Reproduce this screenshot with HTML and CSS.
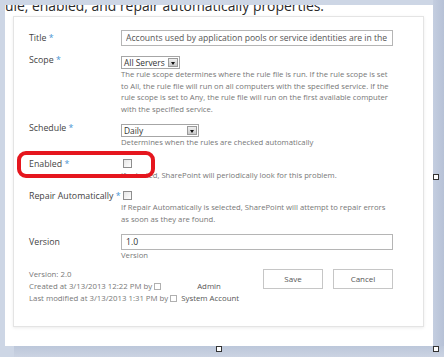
FILE: index.html
```html
<!DOCTYPE html>
<html lang="en">
<head>
    <meta charset="UTF-8">
    <title>Rule definition</title>
    <link rel="stylesheet" href="styles.css">
</head>
<body>

<div class="page">
    <p class="doc-text">ule, enabled, and repair automatically properties.</p>

    <div class="dialog">
        <div class="row">
            <div class="label label-input">Title <span class="req">*</span></div>
            <div class="control">
                <input class="textbox" type="text" value="Accounts used by application pools or service identities are in the local machine Administrators group">
            </div>
        </div>

        <div class="row row-scope">
            <div class="label label-select">Scope <span class="req">*</span></div>
            <div class="control">
                <span class="select select-scope"><span class="select-value">All Servers</span><span class="select-btn"></span></span>
                <div class="desc">The rule scope determines where the rule file is run. If the rule scope is set<br>to All, the rule file will run on all computers with the specified service. If the<br>rule scope is set to Any, the rule file will run on the first available computer<br>with the specified service.</div>
            </div>
        </div>

        <div class="row row-schedule">
            <div class="label label-select">Schedule <span class="req">*</span></div>
            <div class="control">
                <span class="select select-schedule"><span class="select-value">Daily</span><span class="select-btn"></span></span>
                <div class="desc">Determines when the rules are checked automatically</div>
            </div>
        </div>

        <div class="row row-check">
            <div class="label label-check">Enabled <span class="req">*</span></div>
            <div class="control">
                <div class="check-wrap"><span class="checkbox"></span></div>
                <div class="desc">If selected, SharePoint will periodically look for this problem.</div>
            </div>
        </div>

        <div class="row row-check">
            <div class="label label-check">Repair Automatically <span class="req">*</span></div>
            <div class="control">
                <div class="check-wrap"><span class="checkbox"></span></div>
                <div class="desc">If Repair Automatically is selected, SharePoint will attempt to repair errors<br>as soon as they are found.</div>
            </div>
        </div>

        <div class="row row-version">
            <div class="label label-input">Version</div>
            <div class="control">
                <input class="textbox textbox-version" type="text" value="1.0">
                <div class="desc">Version</div>
            </div>
        </div>

        <div class="footer">
            <div class="meta">
                <div>Version: 2.0</div>
                <div>Created at 3/13/2013 12:22 PM by <span class="presence"></span><span class="user user-created">Admin</span></div>
                <div>Last modified at 3/13/2013 1:31 PM by <span class="presence"></span><span class="user">System Account</span></div>
            </div>
            <div class="buttons">
                <button type="button">Save</button>
                <button type="button">Cancel</button>
            </div>
        </div>

        <div class="highlight"></div>
    </div>
</div>

<div class="bottom-band"></div>

<span class="handle handle-right"></span>
<span class="handle handle-bottom"></span>
<span class="handle handle-corner"></span>

</body>
</html>
```

FILE: styles.css
```css
* {
    box-sizing: border-box;
}
html, body {
    margin: 0;
}
body {
    width: 444px;
    height: 357px;
    overflow: hidden;
    position: relative;
    padding-top: 5px;
    font-family: "Open Sans", "Noto Sans", sans-serif;
    background: linear-gradient(90deg, #cdd6e5 0, #cdd6e5 433px, #c4cee0 433px, #b6c1d6 444px);
}
.page {
    margin-left: 5px;
    width: 428px;
    height: 341px;
    background: #fff;
    overflow: hidden;
}
.doc-text {
    margin: -7px 0 0 0;
    height: 16px;
    font-size: 13.9px;
    line-height: 16px;
    color: #2a2a2a;
    white-space: nowrap;
}
.dialog {
    position: relative;
    margin: 2px 0 0 8px;
    width: 411px;
    height: 311px;
    border: 1px solid #e4e4e4;
    box-shadow: 0 1px 3px rgba(0, 0, 0, 0.08);
    padding: 13px 29px 0 15px;
    color: #444;
}
.row {
    display: grid;
    grid-template-columns: 92px 272px;
}
.row-scope {
    margin-top: 10px;
}
.row-schedule {
    margin-top: 9px;
}
.row-check {
    margin-top: 8px;
}
.row-version {
    margin-top: 9px;
}
.label {
    font-size: 8.8px;
    line-height: 12px;
    color: #444;
    white-space: nowrap;
}
.label-input {
    padding-top: 2px;
}
.label-select {
    margin-top: -2px;
}
.label-check {
    padding-top: 1px;
}
.req {
    color: #4a95d4;
}
.textbox {
    display: block;
    width: 272px;
    height: 16px;
    margin: 0;
    padding: 0 4px;
    border: 1px solid #b5b5b5;
    font-family: inherit;
    font-size: 8.6px;
    color: #555;
    background: #fff;
    outline: none;
}
.textbox-version {
    color: #333;
}
.select {
    display: flex;
    height: 13px;
    border: 1px solid #a6a6a6;
    background: #fff;
    white-space: nowrap;
}
.select-scope {
    width: 59px;
}
.select-schedule {
    width: 78px;
}
.select-value {
    flex: 1;
    padding-left: 2px;
    font-size: 8.4px;
    line-height: 11px;
    color: #333;
}
.select-btn {
    position: relative;
    flex: none;
    width: 10px;
    margin: 1px;
    border: 1px solid #9a9a9a;
    background: linear-gradient(#f0f0f0, #c8c8c8);
}
.select-btn::after {
    content: "";
    position: absolute;
    left: 2px;
    top: 3px;
    border-left: 2px solid transparent;
    border-right: 2px solid transparent;
    border-top: 3px solid #111;
}
.desc {
    font-size: 7.7px;
    line-height: 11.5px;
    color: #777;
    white-space: nowrap;
}
.check-wrap {
    height: 13px;
    padding-top: 2px;
}
.checkbox {
    display: block;
    width: 9px;
    height: 9px;
    margin-left: 2px;
    border: 1px solid #8e8e8e;
    background: linear-gradient(135deg, #e6e6e6, #fff);
}
.footer {
    display: flex;
    justify-content: space-between;
    width: 364px;
    margin-top: 6px;
}
.meta {
    font-size: 7.8px;
    line-height: 12px;
    color: #777;
}
.presence {
    display: inline-block;
    width: 7px;
    height: 7px;
    border: 1px solid #b0b0b0;
    vertical-align: -1px;
}
.user {
    margin-left: 4px;
    color: #555;
}
.user-created {
    margin-left: 36px;
}
.buttons {
    display: flex;
    gap: 10px;
    padding-top: 1px;
}
.buttons button {
    width: 60px;
    height: 20px;
    padding: 0;
    border: 1px solid #c6c6c6;
    background: #fff;
    font-family: inherit;
    font-size: 8px;
    color: #555;
}
.highlight {
    position: absolute;
    left: 3px;
    top: 134px;
    width: 138px;
    height: 27px;
    border: 4px solid #e5161e;
    border-radius: 9px;
}
.bottom-band {
    height: 11px;
    margin-left: 14px;
    background: linear-gradient(#bcc7da, #cbd3e2);
}
.handle {
    position: absolute;
    width: 6px;
    height: 6px;
    border: 1px solid #333;
    background: #fff;
}
.handle-right {
    left: 433px;
    top: 174px;
}
.handle-bottom {
    left: 216px;
    top: 346px;
}
.handle-corner {
    left: 433px;
    top: 346px;
}
```
